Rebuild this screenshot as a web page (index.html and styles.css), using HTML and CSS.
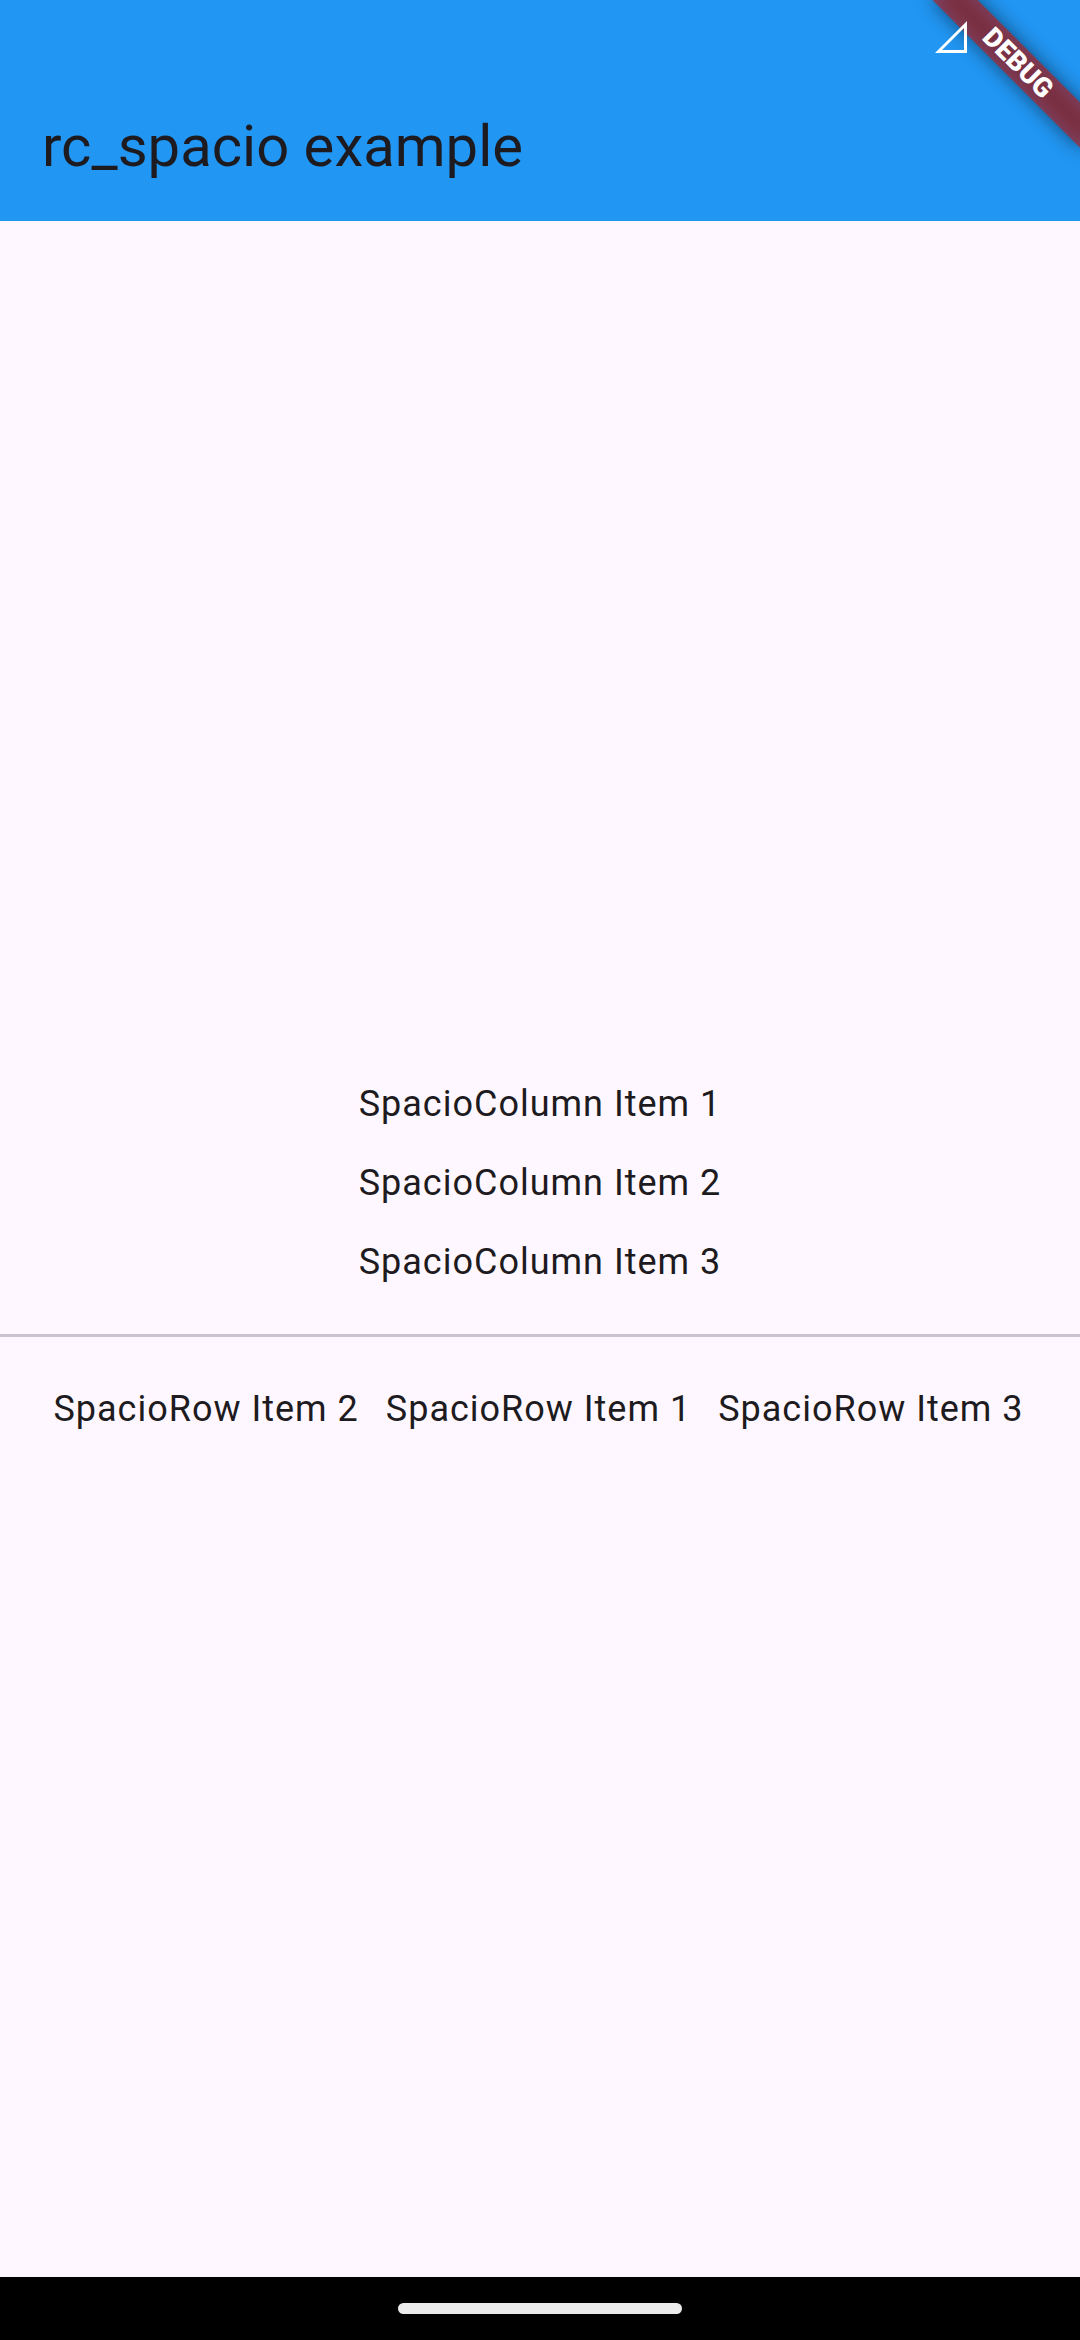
FILE: index.html
```html
<!DOCTYPE html>
<html lang="en">
<head>
  <meta charset="utf-8">
  <meta name="viewport" content="width=device-width, initial-scale=1">
  <title>rc_spacio example</title>
  <link rel="stylesheet" href="styles.css">
</head>
<body class="app">
  <header class="app-bar">
    <div class="status-bar">
      <svg class="signal" viewBox="0 0 32 32" role="img" aria-label="Mobile signal">
        <path fill="#fff" fill-rule="evenodd" d="M0 32 32 0V32ZM7 29H29V7Z"/>
      </svg>
    </div>
    <h1 class="title">rc_spacio example</h1>
    <div class="banner"><span class="banner-text">DEBUG</span></div>
  </header>
  <main class="content">
    <p class="item">SpacioColumn Item 1</p>
    <p class="item">SpacioColumn Item 2</p>
    <p class="item">SpacioColumn Item 3</p>
    <hr class="divider">
    <div class="row">
      <p class="item">SpacioRow Item 2</p>
      <p class="item">SpacioRow Item 1</p>
      <p class="item">SpacioRow Item 3</p>
    </div>
  </main>
  <footer class="nav-bar"><div class="handle"></div></footer>
</body>
</html>
```
FILE: styles.css
```css
* {
  box-sizing: border-box;
}

.app {
  display: flex;
  flex-direction: column;
  min-height: 100vh;
  margin: 0;
  background: #fef7ff;
  color: #1d1b20;
  font-family: Roboto, sans-serif;
}

.app-bar {
  position: relative;
  overflow: hidden;
  background: #2196f3;
}

.status-bar {
  position: relative;
  z-index: 1;
  display: flex;
  justify-content: flex-end;
  align-items: center;
  height: 74px;
  padding-right: 113px;
}

.signal {
  width: 32px;
  height: 32px;
}

.title {
  margin: 0;
  padding: 35px 42px 37px;
  font-size: 58px;
  font-weight: 400;
  line-height: 75px;
}

/* Diagonal corner ribbon with a soft shadow underneath */
.banner {
  position: absolute;
  top: 47px;
  right: -43px;
  width: 210px;
  height: 32px;
  transform: rotate(45deg);
  color: #fff;
  font-size: 27px;
  font-weight: 900;
  line-height: 32px;
  text-align: center;
}

.banner::before,
.banner::after {
  content: "";
  position: absolute;
  inset: 0;
}

.banner::before {
  background: rgba(0, 0, 0, 0.5);
  filter: blur(10px);
}

.banner::after {
  background: rgba(183, 28, 28, 0.63);
}

.banner-text {
  position: relative;
  z-index: 1;
}

.content {
  flex: 1;
  display: flex;
  flex-direction: column;
  align-items: center;
  justify-content: center;
  gap: 26px;
  padding-top: 15px;
}

.item {
  margin: 0;
  font-size: 36px;
  line-height: 53px;
  letter-spacing: 1px;
}

.divider {
  width: 100%;
  height: 3px;
  margin: 19px 0 20px;
  border: 0;
  background: #cac4d0;
}

.row {
  display: flex;
  flex-wrap: wrap;
  justify-content: center;
  gap: 27px;
  padding-right: 3px;
}

.nav-bar {
  display: flex;
  align-items: center;
  justify-content: center;
  height: 63px;
  background: #000;
}

.handle {
  width: 284px;
  height: 11px;
  border-radius: 6px;
  background: #ebebeb;
}
```
